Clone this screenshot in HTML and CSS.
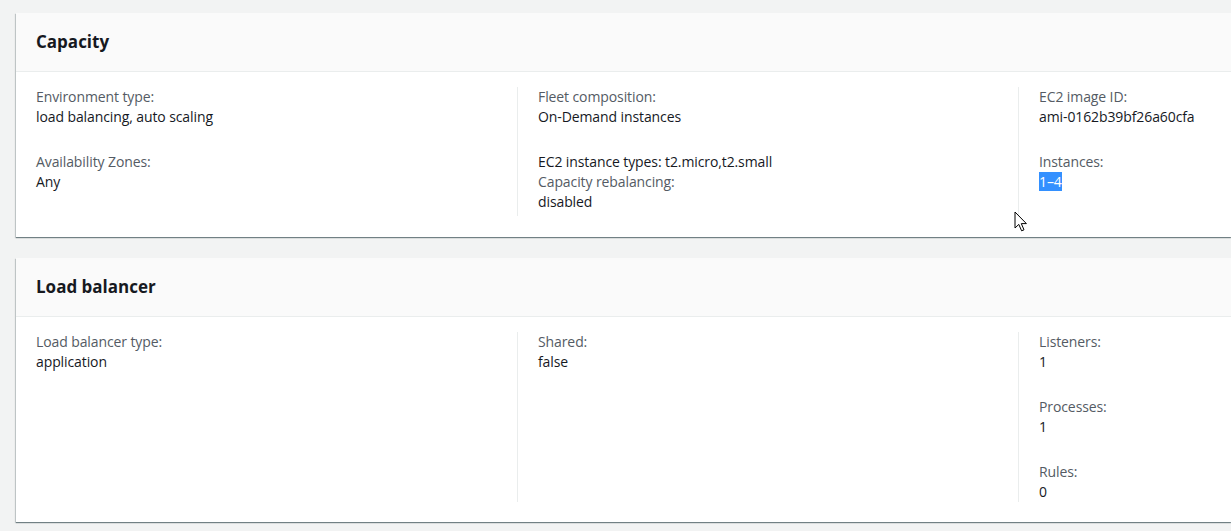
FILE: index.html
```html
<!DOCTYPE html>
<html>
<head>
<meta charset="utf-8">
<link rel="stylesheet" href="styles.css">
</head>
<body>
<div class="page">
  <section class="card">
    <div class="card-header"><h2>Capacity</h2></div>
    <div class="card-body card-body--tall">
      <div class="col">
        <div class="group"><div class="label">Environment type:</div><div class="value">load balancing, auto scaling</div></div>
        <div class="group"><div class="label">Availability Zones:</div><div class="value">Any</div></div>
      </div>
      <div class="col">
        <div class="group"><div class="label">Fleet composition:</div><div class="value">On-Demand instances</div></div>
        <div class="group"><div class="value">EC2 instance types: t2.micro,t2.small</div><div class="label">Capacity rebalancing:</div><div class="value">disabled</div></div>
      </div>
      <div class="col">
        <div class="group"><div class="label">EC2 image ID:</div><div class="value">ami-0162b39bf26a60cfa</div></div>
        <div class="group"><div class="label">Instances:</div><div class="value"><span class="selected">1–4</span></div></div>
      </div>
    </div>
  </section>
  <section class="card">
    <div class="card-header"><h2>Load balancer</h2></div>
    <div class="card-body">
      <div class="col">
        <div class="group"><div class="label">Load balancer type:</div><div class="value">application</div></div>
      </div>
      <div class="col">
        <div class="group"><div class="label">Shared:</div><div class="value">false</div></div>
      </div>
      <div class="col">
        <div class="group"><div class="label">Listeners:</div><div class="value">1</div></div>
        <div class="group"><div class="label">Processes:</div><div class="value">1</div></div>
        <div class="group"><div class="label">Rules:</div><div class="value">0</div></div>
      </div>
    </div>
  </section>
</div>
<svg class="cursor" width="14" height="22" viewBox="0 0 14 22"><path d="M1 1 L1 17 L4.8 13.4 L7.6 19.8 L10 18.8 L7.3 12.6 L12.4 12.6 Z" fill="#fff" stroke="#000" stroke-width="1" stroke-linejoin="round"/></svg>
</body>
</html>
```
FILE: styles.css
```css
html, body {
  margin: 0;
  padding: 0;
  background: #f2f3f3;
  overflow: hidden;
  width: 1231px;
  height: 531px;
  position: relative;
}
body {
  font-family: "Open Sans", "Noto Sans", Arial, sans-serif;
  font-size: 14px;
  line-height: 20px;
  letter-spacing: -0.1px;
  color: #16191f;
}
.page {
  padding: 13px 0 0 16px;
  display: flex;
  flex-direction: column;
  gap: 21px;
}
.card {
  width: 1215px;
  background: #fff;
  box-shadow: 0 1px 1px 0 rgba(0, 28, 36, 0.45), -1px 1px 1px 0 rgba(0, 28, 36, 0.15);
}
.card-header {
  background: #fafafa;
  height: 58px;
  border-bottom: 1px solid #eaeded;
  display: flex;
  align-items: center;
  padding-left: 20px;
}
.card-header h2 {
  margin: 0;
  font-size: 17px;
  font-weight: 700;
  letter-spacing: 0;
  color: #16191f;
}
.card-body {
  display: grid;
  grid-template-columns: 501px 501px 1fr;
  padding: 15px 0 20px;
  align-items: stretch;
}
.card-body--tall {
  padding-bottom: 21px;
}
.card-body--tall .col {
  padding-bottom: 4px;
}
.col {
  padding: 0 20px;
  min-width: 0;
}
.col + .col {
  border-left: 1px solid #eaeded;
}
.group + .group {
  margin-top: 25px;
}
.label {
  color: #545b64;
}
.value {
  color: #16191f;
}
.selected {
  background: #3390ff;
  color: #fff;
}
.cursor {
  position: absolute;
  left: 1014px;
  top: 211px;
}
```
